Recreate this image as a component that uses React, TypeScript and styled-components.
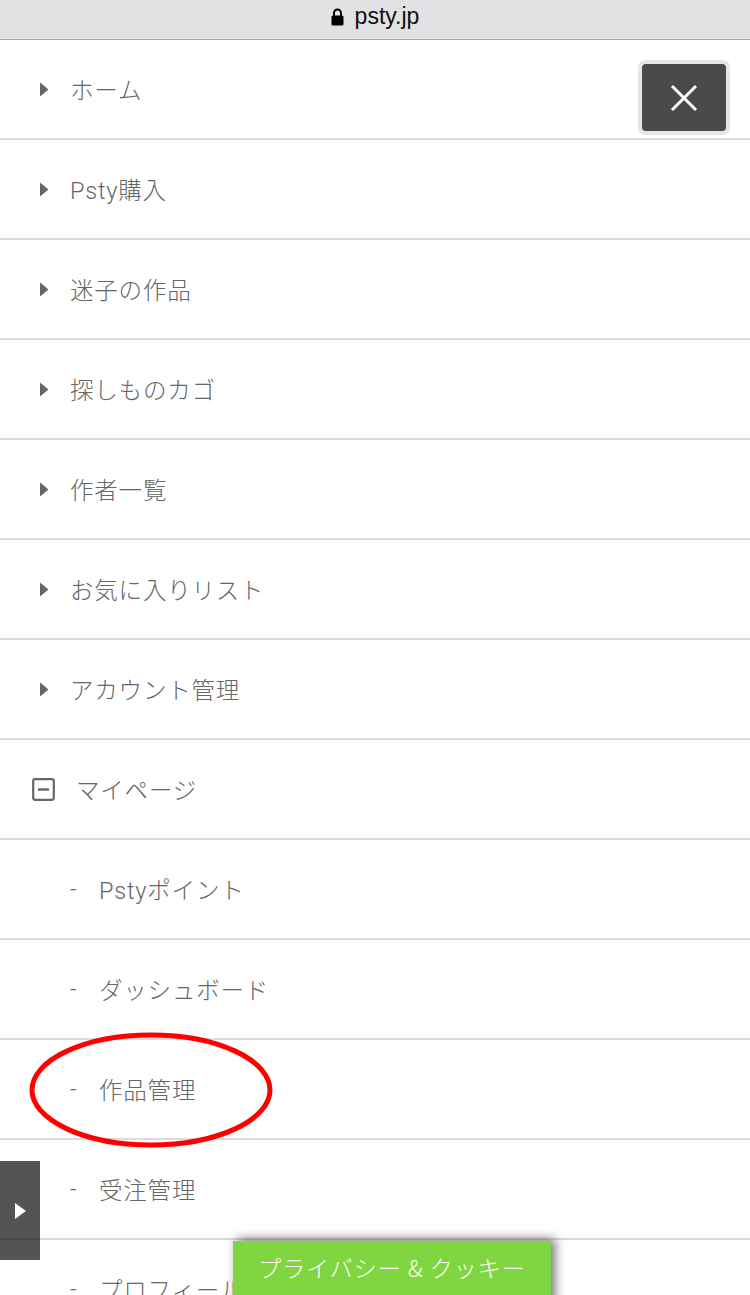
import React from 'react';
import styled, { createGlobalStyle } from 'styled-components';

const GlobalStyle = createGlobalStyle`
  html, body {
    margin: 0;
    padding: 0;
    background: #fff;
  }
  body {
    font-family: 'Roboto', 'Noto Sans CJK JP', sans-serif;
  }
`;

const Page = styled.div`
  position: relative;
  width: 750px;
  height: 1295px;
  overflow: hidden;
  background: #fff;
`;

const StatusBar = styled.div`
  height: 40px;
  background: #e1e2e3;
  border-bottom: 1px solid #a8a8a8;
  display: flex;
  align-items: center;
  justify-content: center;
  gap: 11px;
  font-family: 'Liberation Sans', 'Noto Sans', sans-serif;
  font-size: 23px;
  color: #111;
  padding-bottom: 6px;
  box-sizing: border-box;
`;

const MenuList = styled.ul`
  list-style: none;
  margin: 0;
  padding: 0;
`;

type Kind = 'link' | 'open' | 'sub';

const Row = styled.li<{ $kind: Kind }>`
  height: 98px;
  border-bottom: 2px solid #dcdcdc;
  display: flex;
  align-items: center;
  padding-left: ${p => (p.$kind === 'open' ? '32px' : p.$kind === 'sub' ? '70px' : '39px')};
  font-size: 23.5px;
  font-weight: 300;
  color: #666;
  letter-spacing: 0.8px;
`;

const Marker = styled.span<{ $kind: Kind }>`
  display: inline-flex;
  align-items: center;
  width: ${p => (p.$kind === 'open' ? '44px' : p.$kind === 'sub' ? '29px' : '31px')};
  flex-shrink: 0;
  color: #666;
`;

const CloseWrap = styled.div`
  position: absolute;
  top: 60px;
  right: 20px;
  width: 92px;
  height: 75px;
  border-radius: 7px;
  background: #e6e6e6;
  display: flex;
  align-items: center;
  justify-content: center;
`;

const CloseButton = styled.button`
  width: 84px;
  height: 67px;
  border: none;
  border-radius: 4px;
  background: #4a4a4a;
  display: flex;
  align-items: center;
  justify-content: center;
  padding: 0;
`;

const SideTab = styled.div`
  position: absolute;
  left: 0;
  top: 1161px;
  width: 40px;
  height: 99px;
  background: rgba(0, 0, 0, 0.67);
  display: flex;
  align-items: center;
  justify-content: center;
`;

const CookieButton = styled.div`
  position: absolute;
  left: 233px;
  top: 1241px;
  width: 318px;
  height: 70px;
  background: #80d641;
  box-shadow: 4px -2px 10px rgba(0, 0, 0, 0.55);
  color: #fff;
  font-family: 'Noto Sans CJK JP', sans-serif;
  font-weight: 300;
  font-size: 23px;
  letter-spacing: 1px;
  text-align: center;
  padding-top: 9px;
  box-sizing: border-box;
`;

const Circle = styled.svg`
  position: absolute;
  left: 28px;
  top: 1031px;
  pointer-events: none;
`;

const items: { label: string; kind: Kind }[] = [
  { label: 'ホーム', kind: 'link' },
  { label: 'Psty購入', kind: 'link' },
  { label: '迷子の作品', kind: 'link' },
  { label: '探しものカゴ', kind: 'link' },
  { label: '作者一覧', kind: 'link' },
  { label: 'お気に入りリスト', kind: 'link' },
  { label: 'アカウント管理', kind: 'link' },
  { label: 'マイページ', kind: 'open' },
  { label: 'Pstyポイント', kind: 'sub' },
  { label: 'ダッシュボード', kind: 'sub' },
  { label: '作品管理', kind: 'sub' },
  { label: '受注管理', kind: 'sub' },
  { label: 'プロフィール', kind: 'sub' },
];

const MarkerIcon: React.FC<{ kind: Kind }> = ({ kind }) => {
  if (kind === 'link') {
    return (
      <svg width="10" height="15" viewBox="0 0 10 15">
        <path d="M1 0.5 L9.5 7.5 L1 14.5 Z" fill="#666" />
      </svg>
    );
  }
  if (kind === 'open') {
    return (
      <svg width="23" height="23" viewBox="0 0 23 23">
        <rect x="1.2" y="1.2" width="20.6" height="20.6" rx="2" fill="none" stroke="#666" strokeWidth="2.2" />
        <rect x="6" y="10.3" width="11" height="2.4" fill="#666" />
      </svg>
    );
  }
  return <span>-</span>;
};

const App: React.FC = () => {
  return (
    <Page>
      <GlobalStyle />
      <StatusBar>
        <svg width="13" height="18" viewBox="0 0 13 18">
          <path d="M3 8 V5 a3.5 3.5 0 0 1 7 0 V8" fill="none" stroke="#000" strokeWidth="2" />
          <rect x="0.5" y="7.5" width="12" height="10" rx="1.5" fill="#000" />
        </svg>
        <span>psty.jp</span>
      </StatusBar>
      <MenuList>
        {items.map(item => (
          <Row key={item.label} $kind={item.kind}>
            <Marker $kind={item.kind}>
              <MarkerIcon kind={item.kind} />
            </Marker>
            {item.label}
          </Row>
        ))}
      </MenuList>

      <CloseWrap>
        <CloseButton aria-label="close">
          <svg width="30" height="30" viewBox="0 0 30 30">
            <path d="M3 3 L27 27 M27 3 L3 27" stroke="#fff" strokeWidth="3" />
          </svg>
        </CloseButton>
      </CloseWrap>

      <Circle width="246" height="118" viewBox="0 0 246 118">
        <ellipse cx="123" cy="59" rx="119" ry="55" fill="none" stroke="#f00" strokeWidth="5" />
      </Circle>

      <SideTab>
        <svg width="11" height="16" viewBox="0 0 11 16">
          <path d="M0 0 L11 8 L0 16 Z" fill="#fff" />
        </svg>
      </SideTab>

      <CookieButton>プライバシー &amp; クッキー</CookieButton>
    </Page>
  );
};

export default App;
